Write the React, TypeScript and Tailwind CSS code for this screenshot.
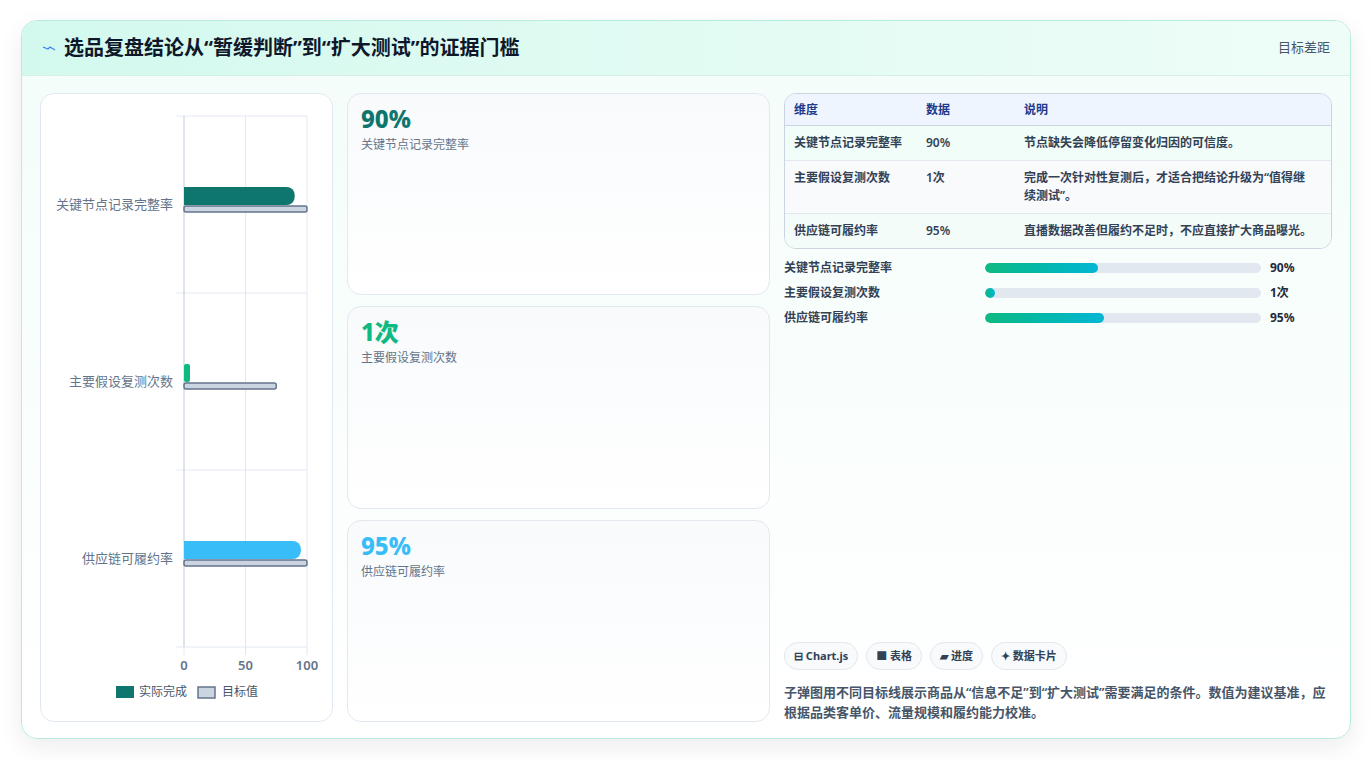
export default function App() {
  const font = { fontFamily: '"Noto Sans", "Noto Sans CJK SC", sans-serif' };
  const cats = [
    { label: "关键节点记录完整率", v: 90, t: 100, c: "#0f766e", y: 110 },
    { label: "主要假设复测次数", v: 5, t: 75, c: "#10b981", y: 287 },
    { label: "供应链可履约率", v: 95, t: 100, c: "#38bdf8", y: 464 },
  ];
  const sx = (v: number) => 143 + (v / 100) * 123;
  const cards = [
    { v: "90%", l: "关键节点记录完整率", c: "text-[#0f766e]" },
    { v: "1次", l: "主要假设复测次数", c: "text-[#10b981]" },
    { v: "95%", l: "供应链可履约率", c: "text-[#38bdf8]" },
  ];
  const rows = [
    ["关键节点记录完整率", "90%", "节点缺失会降低停留变化归因的可信度。", "bg-[#f0fdf8]"],
    ["主要假设复测次数", "1次", "完成一次针对性复测后，才适合把结论升级为“值得继续测试”。", "bg-[#f8fafc]"],
    ["供应链可履约率", "95%", "直播数据改善但履约不足时，不应直接扩大商品曝光。", "bg-[#f3fcf9]"],
  ];
  const prog = [
    ["关键节点记录完整率", 41, "90%"],
    ["主要假设复测次数", 3.6, "1次"],
    ["供应链可履约率", 43, "95%"],
  ] as const;
  return (
    <div className="w-[1372px] h-[761px] bg-white pt-[20px] px-[21px]" style={font}>
      <div className="h-[719px] rounded-[16px] border border-[#b8ece0] shadow-[0_8px_24px_rgba(15,23,42,0.08)] bg-gradient-to-b from-[#f3fdf9] to-[#ffffff] overflow-hidden flex flex-col">
        <div className="h-[55px] shrink-0 flex items-center justify-between px-[20px] bg-gradient-to-r from-[#d3f9ee] to-[#effdf8] border-b border-[#d6efe8]">
          <div className="flex items-center gap-[8px]">
            <svg width="14" height="10" viewBox="0 0 14 10"><path d="M1 4 L6 6 L8 4 L13 7" stroke="#3b82f6" strokeWidth="1.3" fill="none"/></svg>
            <span className="text-[20px] font-bold text-[#0f172a]">选品复盘结论从“暂缓判断”到“扩大测试”的证据门槛</span>
          </div>
          <span className="text-[13px] text-[#475569]">目标差距</span>
        </div>
        <div className="flex-1 flex gap-[14px] px-[18px] pt-[17px] pb-[18px]">
          <div className="w-[293px] shrink-0 rounded-[14px] border border-[#e2e8f0] bg-white">
            <svg width="292" height="627" className="block">
              {[22, 199, 376, 553].map((y) => (<line key={y} x1="135" x2="266" y1={y} y2={y} stroke="#e2e8f0" />))}
              {[143, 204.5, 266].map((x) => (<line key={x} x1={x} x2={x} y1="22" y2="561" stroke="#e2e8f0" />))}
              <line x1="143" x2="143" y1="22" y2="553" stroke="#cbd5e1" />
              {cats.map((c) => (
                <g key={c.label}>
                  <text x="132" y={c.y + 5} textAnchor="end" fontSize="13" fill="#64748b">{c.label}</text>
                  {c.v < 10 ? (
                    <rect x="143" y={c.y - 17} width="6" height="18" rx="2" fill={c.c} />
                  ) : (
                    <path d={`M143 ${c.y - 17} H${sx(c.v) - 8} a8 8 0 0 1 8 8 v2 a8 8 0 0 1 -8 8 H143 Z`} fill={c.c} />
                  )}
                  <rect x="143" y={c.y + 2} width={sx(c.t) - 143} height="6" rx="2" fill="#cbd5e1" stroke="#64748b" strokeWidth="1.5" />
                </g>
              ))}
              {[[143, "0"], [204.5, "50"], [266, "100"]].map(([x, t]) => (
                <text key={t as string} x={x as number} y="576" textAnchor="middle" fontSize="13" fontWeight="600" fill="#64748b">{t}</text>
              ))}
              <rect x="75" y="592" width="18" height="12" fill="#0f766e" />
              <text x="98" y="602" fontSize="12" fill="#475569">实际完成</text>
              <rect x="157" y="593" width="17" height="11" fill="#cbd5e1" stroke="#64748b" strokeWidth="1.5" />
              <text x="181" y="602" fontSize="12" fill="#475569">目标值</text>
            </svg>
          </div>
          <div className="w-[423px] shrink-0 flex flex-col gap-[11px]">
            {cards.map((c) => (
              <div key={c.l} className="flex-1 rounded-[14px] border border-[#e2e8f0] bg-gradient-to-b from-[#f8fafc] to-[#ffffff] px-[13px] pt-[9px]">
                <div className={`text-[24px] font-extrabold leading-[32px] ${c.c}`}>{c.v}</div>
                <div className="text-[12px] text-[#64748b] mt-[1px]">{c.l}</div>
              </div>
            ))}
          </div>
          <div className="flex-1 flex flex-col">
            <div className="rounded-[12px] border border-[#cbd5e1] overflow-hidden text-[12px]">
              <div className="flex h-[32px] items-center bg-[#eef5fe] border-b border-[#cbd5e1] text-[#1e3a8a] font-bold px-[9px]">
                <div className="w-[132px]">维度</div><div className="w-[98px]">数据</div><div className="flex-1">说明</div>
              </div>
              {rows.map((r, i) => (
                <div key={i} className={`flex items-start px-[9px] py-[8px] ${r[3]} ${i < 2 ? "border-b border-[#e2e8f0]" : ""} text-[#334155] font-semibold leading-[18px]`}>
                  <div className="w-[132px]">{r[0]}</div><div className="w-[98px]">{r[1]}</div><div className="flex-1 pr-[8px]">{r[2]}</div>
                </div>
              ))}
            </div>
            <div className="flex flex-col gap-[7px] mt-[10px]">
              {prog.map((p) => (
                <div key={p[0]} className="flex items-center text-[12px] font-semibold text-[#334155] h-[18px]">
                  <div className="w-[201px]">{p[0]}</div>
                  <div className="w-[276px] h-[10px] rounded-full bg-[#e2e8f0] overflow-hidden">
                    <div className="h-full rounded-full bg-gradient-to-r from-[#10b981] to-[#06b6d4]" style={{ width: `${p[1]}%` }} />
                  </div>
                  <div className="ml-[9px] font-bold text-[#1e293b]">{p[2]}</div>
                </div>
              ))}
            </div>
            <div className="flex-1" />
            <div className="flex gap-[8px] text-[11px] font-bold text-[#334155]">
              {["⊟ Chart.js", "■ 表格", "▰ 进度", "✦ 数据卡片"].map((t) => (
                <span key={t} className="h-[28px] px-[9px] flex items-center rounded-full border border-[#e2e8f0] bg-[#f8fafc]">{t}</span>
              ))}
            </div>
            <p className="mt-[12px] text-[13px] leading-[20px] font-semibold text-[#475569]">子弹图用不同目标线展示商品从“信息不足”到“扩大测试”需要满足的条件。数值为建议基准，应根据品类客单价、流量规模和履约能力校准。</p>
          </div>
        </div>
      </div>
    </div>
  );
}
